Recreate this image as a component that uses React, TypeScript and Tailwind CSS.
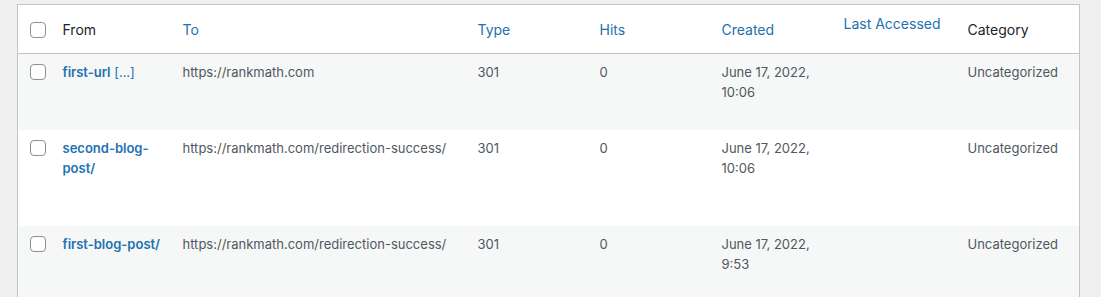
import { ReactNode } from "react";

type Redirect = {
  from: string;
  more?: boolean;
  to: string;
  type: string;
  hits: string;
  created: string;
  lastAccessed: string;
  category: string;
  height: string;
};

const rows: Redirect[] = [
  { from: "first-url", more: true, to: "https://rankmath.com", type: "301", hits: "0", created: "June 17, 2022, 10:06", lastAccessed: "", category: "Uncategorized", height: "h-[76px]" },
  { from: "second-blog-post/", to: "https://rankmath.com/redirection-success/", type: "301", hits: "0", created: "June 17, 2022, 10:06", lastAccessed: "", category: "Uncategorized", height: "h-[96px]" },
  { from: "first-blog-post/", to: "https://rankmath.com/redirection-success/", type: "301", hits: "0", created: "June 17, 2022, 9:53", lastAccessed: "", category: "Uncategorized", height: "h-[96px]" },
];

function Checkbox() {
  return <span className="block w-4 h-4 rounded-[4px] border border-[#8c8f94] bg-white" />;
}

function Th({ children, className = "" }: { children?: ReactNode; className?: string }) {
  return <th className={`text-left font-normal align-top text-[14px] leading-[20px] ${className}`}>{children}</th>;
}

function Td({ children, className = "" }: { children?: ReactNode; className?: string }) {
  return <td className={`align-top pt-[8px] pl-[10px] pr-[10px] ${className}`}>{children}</td>;
}

export default function App() {
  return (
    <div className="min-h-screen bg-[#f0f0f1] pl-[17px] pr-[22px] pt-[4px] font-['Inter','Noto_Sans',sans-serif] text-[13px] leading-[20px] text-[#50575e]">
      <table className="w-[1063px] table-fixed border-collapse border border-[#c3c4c7] bg-white">
        <colgroup>
          <col className="w-[35px]" />
          <col className="w-[120px]" />
          <col className="w-[295px]" />
          <col className="w-[122px]" />
          <col className="w-[122px]" />
          <col className="w-[122px]" />
          <col className="w-[124px]" />
          <col className="w-[122px]" />
        </colgroup>
        <thead>
          <tr className="h-[49px] border-b border-[#c3c4c7]">
            <Th className="pl-[12px] pt-[17px]"><Checkbox /></Th>
            <Th className="pl-[10px] pt-[15px] text-[#1d2327]">From</Th>
            <Th className="pl-[10px] pt-[15px] text-[#2271b1]">To</Th>
            <Th className="pl-[10px] pt-[15px] text-[#2271b1]">Type</Th>
            <Th className="pl-[10px] pt-[15px] text-[#2271b1]">Hits</Th>
            <Th className="pl-[10px] pt-[15px] text-[#2271b1]">Created</Th>
            <Th className="pl-[10px] pt-[9px] text-[#2271b1]">Last Accessed</Th>
            <Th className="pl-[10px] pt-[15px] text-[#1d2327]">Category</Th>
          </tr>
        </thead>
        <tbody>
          {rows.map((r, i) => (
            <tr key={r.from} className={`${r.height} ${i % 2 === 0 ? "bg-[#f6f7f7]" : "bg-white"}`}>
              <td className="align-top pl-[12px] pt-[10px]"><Checkbox /></td>
              <Td className="pr-[2px]">
                <a className="font-semibold text-[#2271b1]">{r.from}</a>
                {r.more && <a className="text-[#2271b1]"> [...]</a>}
              </Td>
              <Td>{r.to}</Td>
              <Td>{r.type}</Td>
              <Td>{r.hits}</Td>
              <Td>{r.created}</Td>
              <Td>{r.lastAccessed}</Td>
              <Td>{r.category}</Td>
            </tr>
          ))}
        </tbody>
      </table>
    </div>
  );
}
